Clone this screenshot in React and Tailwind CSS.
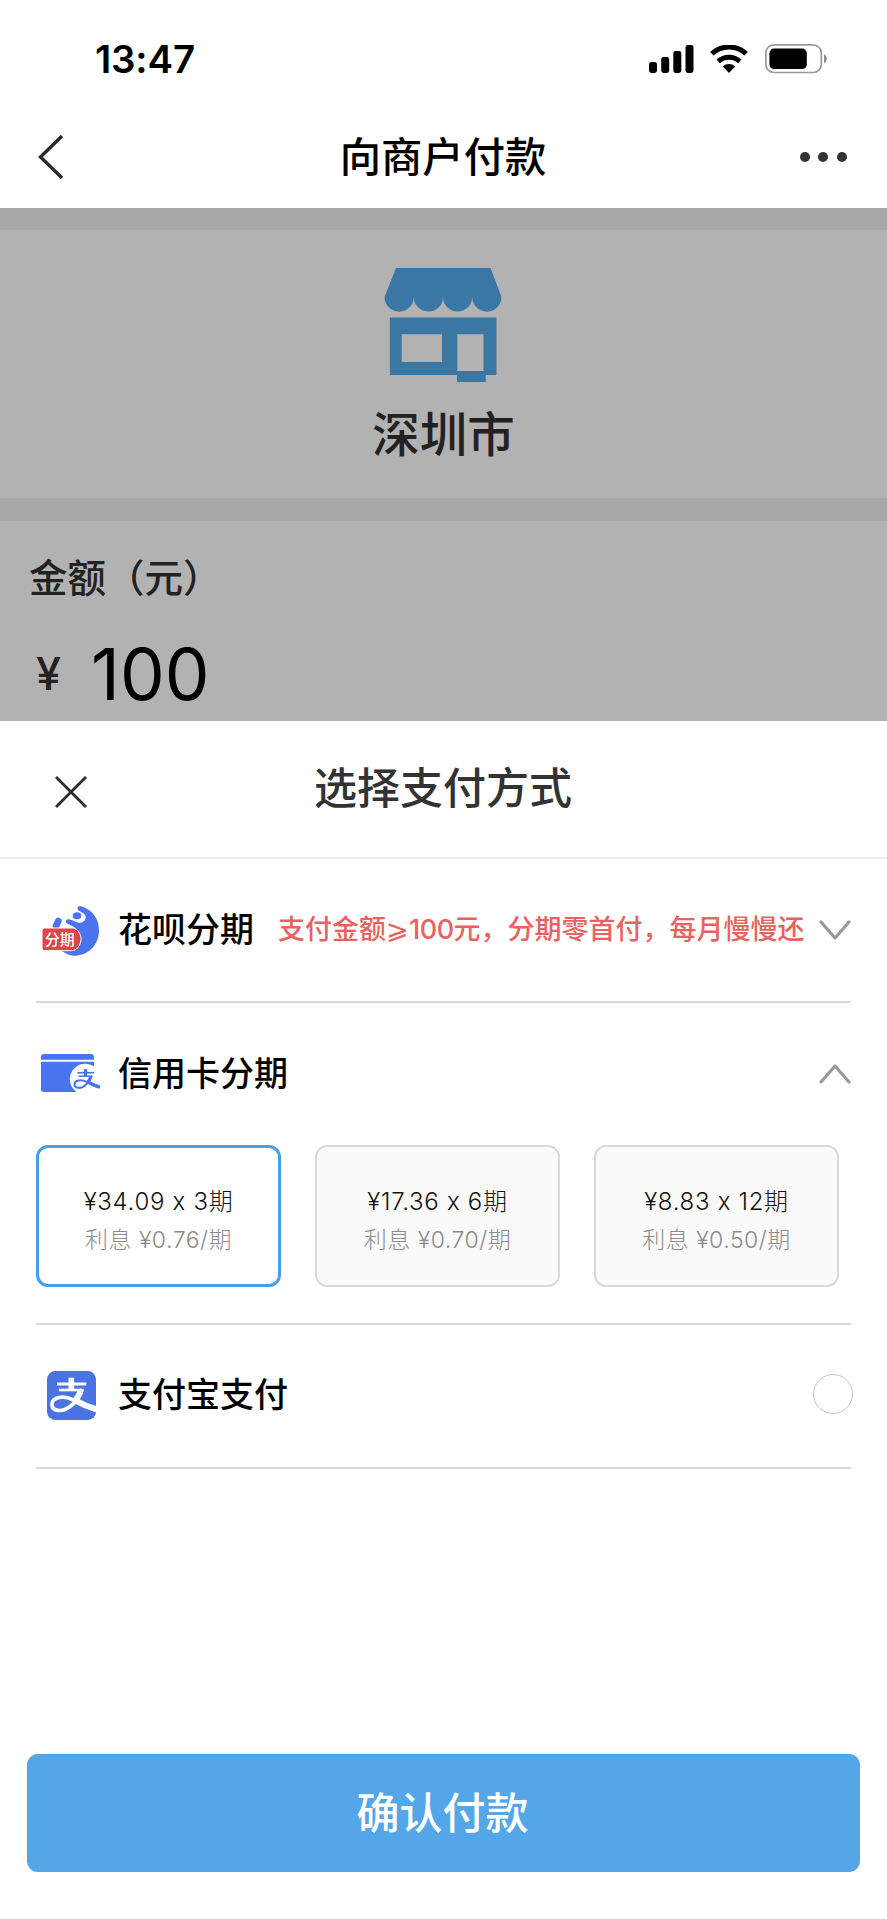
import { useState } from "react"

const plans = [
  { price: "¥34.09 x 3期", fee: "利息 ¥0.76/期" },
  { price: "¥17.36 x 6期", fee: "利息 ¥0.70/期" },
  { price: "¥8.83 x 12期", fee: "利息 ¥0.50/期" }
]

function SignalIcon() {
  return (
    <svg width="45" height="28" viewBox="0 0 45 28">
      <rect x="0" y="17" width="8" height="11" rx="2.4" />
      <rect x="12.2" y="12" width="8" height="16" rx="2.4" />
      <rect x="24.3" y="6" width="8" height="22" rx="2.4" />
      <rect x="36.5" y="0" width="8" height="28" rx="2.4" />
    </svg>
  )
}

function WifiIcon() {
  return (
    <svg width="38" height="28" viewBox="0 0 38 28" fill="none" stroke="#000">
      <path d="M1.8 8.8 A25 25 0 0 1 36.2 8.8" strokeWidth="5" />
      <path d="M8.2 16.4 A16.2 16.2 0 0 1 29.8 16.4" strokeWidth="5" />
      <path d="M19 28 L12.8 21.6 A9 9 0 0 1 25.2 21.6 Z" fill="#000" stroke="none" />
    </svg>
  )
}

function BatteryIcon() {
  return (
    <svg width="63" height="30" viewBox="0 0 63 30">
      <rect x="0.9" y="0.9" width="55.4" height="27.6" rx="8" fill="none" stroke="#9a9a9a" strokeWidth="1.7" />
      <rect x="4.4" y="4.6" width="37.4" height="20.4" rx="4.6" />
      <path d="M59 10.2 C62.6 11.4 62.6 18 59 19.2 Z" fill="#8a8a8a" />
    </svg>
  )
}

function StoreIcon() {
  return (
    <svg width="118" height="115" viewBox="0 0 118 115" fill="#3a77a5">
      <path d="M12 0 H106.5 L117.5 29 A14.6 14.6 0 0 1 88.2 29 A14.6 14.6 0 0 1 59 29 A14.6 14.6 0 0 1 29.8 29 A14.6 14.6 0 0 1 0.5 29 Z" />
      <path
        fillRule="evenodd"
        d="M5.8 49.5 H112.5 V107 H101.7 V114 H73 V107 H5.8 Z M17.7 66.3 V94 H58 V66.3 Z M73.3 66.3 V103 H99.5 V66.3 Z"
      />
    </svg>
  )
}

function HuabeiIcon() {
  return (
    <svg width="58" height="50" viewBox="0 0 174 150" className="overflow-visible">
      <path
        d="M114 0 C150 8 173 40 171 76 C169 120 137 148 101 149 C82 149 66 141 52 128 L106 110 L106 72 C98 64 86 56 76 53 C69 49 71 39 80 40 C92 42 103 50 112 51 C123 51 133 42 131 31 C128 22 119 18 110 14 C104 9 107 0 114 0 Z"
        fill="#4974ee"
      />
      <ellipse cx="105" cy="29" rx="13" ry="10.5" fill="#4974ee" />
      <path d="M42 60 L49 45" stroke="#4974ee" strokeWidth="20" strokeLinecap="round" />
      <path
        d="M8 66 H92 C104 66 117 82 117 98 C117 118 104 134 89 134 H8 Q0 134 0 126 V74 Q0 66 8 66 Z"
        fill="#dc4549"
        stroke="#fff"
        strokeWidth="3"
      />
      <text
        x="8"
        y="117"
        fontSize="45"
        fontWeight="500"
        fill="#fff"
        fontFamily="'Noto Sans CJK SC', sans-serif"
      >
        分期
      </text>
    </svg>
  )
}

// brand mark drawn on a 147 unit square
function AlipayMark({ color }) {
  return (
    <g fill="none" stroke={color}>
      <path d="M73 20 V58" strokeWidth="17" />
      <path d="M30 39 H118" strokeWidth="9" />
      <path d="M36 57 H106" strokeWidth="8" />
      <path
        d="M106 54 C101 76 84 96 66 109 C48 122 14 124 15 99 C16 77 52 73 76 86 C101 99 122 107 148 115"
        strokeWidth="11"
      />
      <path d="M101 56 C98 70 90 82 82 91" strokeWidth="16" />
      <path d="M84 88 C106 100 124 108 148 115" strokeWidth="18" />
    </g>
  )
}

function CreditCardIcon() {
  return (
    <svg width="60" height="40" viewBox="0 0 180 120">
      <path d="M10 0 H149 Q159 0 159 10 V17 H0 V10 Q0 0 10 0 Z" fill="#4974ee" />
      <path d="M0 23 H159 V37 A45 45 0 0 0 107 114 H9 Q0 114 0 105 Z" fill="#4974ee" />
      <g transform="translate(92 34) scale(0.57)">
        <AlipayMark color="#4974ee" />
      </g>
    </svg>
  )
}

function AlipayIcon() {
  return (
    <svg width="49" height="49" viewBox="0 0 147 147">
      <rect width="147" height="147" rx="25" fill="#4974e2" />
      <AlipayMark color="#fff" />
    </svg>
  )
}

function Chevron({ up }) {
  return (
    <svg width="32" height="20" viewBox="0 0 32 20" fill="none" stroke="#999" strokeWidth="3.2" strokeLinecap="round" strokeLinejoin="round">
      <path d={up ? "M2 18 L16 2 L30 18" : "M2 2 L16 18 L30 2"} />
    </svg>
  )
}

export default function App() {

  const [selected, setSelected] = useState(0)

  return (
    <div className="w-[887px] h-[1919px] flex flex-col overflow-hidden bg-white text-black font-['Inter','Noto_Sans_CJK_SC',sans-serif] [font-feature-settings:'calt'_0]">

      {/* STATUS BAR */}
      <div className="h-[106px] shrink-0 flex items-start pl-[95px] pr-[59px] pt-[44px]">
        <span className="text-[38.5px] leading-[30px] font-semibold tracking-[-0.2px]">13:47</span>
        <div className="flex-1" />
        <div className="flex items-start">
          <div className="pt-px mr-[16px]"><SignalIcon /></div>
          <div className="pt-px mr-[17px]"><WifiIcon /></div>
          <BatteryIcon />
        </div>
      </div>

      {/* NAV */}
      <header className="h-[102px] shrink-0 grid grid-cols-3 items-center pl-[37px] pr-[40px]">
        <svg width="28" height="44" viewBox="0 0 28 44" fill="none" stroke="#2b2b2b" strokeWidth="3.4">
          <path d="M25 1 L3.5 22 L25 43" />
        </svg>
        <h1 className="text-[41.3px] leading-[60px] font-medium text-center whitespace-nowrap pl-[2px]">向商户付款</h1>
        <div className="flex justify-end gap-[8.6px]">
          <i className="size-[10px] rounded-full bg-[#333]" />
          <i className="size-[10px] rounded-full bg-[#333]" />
          <i className="size-[10px] rounded-full bg-[#333]" />
        </div>
      </header>

      {/* DIMMED PAGE */}
      <main className="h-[513px] shrink-0 bg-[#b2b2b2] text-[#222] overflow-hidden">
        <div className="h-[22px] bg-[#a8a8a8]" />
        <section className="h-[268px] flex flex-col items-center pt-[38px]">
          <div className="pr-[2px]"><StoreIcon /></div>
          <p className="mt-[17px] text-[47.5px] leading-[70px] font-medium">深圳市</p>
        </section>
        <div className="h-[23px] bg-[#a8a8a8]" />
        <section className="pl-[29px] pt-[28px]">
          <p className="text-[38.5px] leading-[58px] font-medium">金额（元）</p>
          <div className="flex items-start pl-[7px] mt-[22px]">
            <span className="text-[45px] leading-[90px] font-medium w-[55px]">¥</span>
            <span className="text-[71px] leading-[90px] text-black">100</span>
          </div>
        </section>
      </main>

      {/* PAYMENT SHEET */}
      <section className="flex-1 flex flex-col">
        <div className="h-[138px] grid grid-cols-[1fr_auto_1fr] items-start border-b-2 border-[#ededed] pl-[55px] pr-[56px] pt-[37px]">
          <svg className="mt-[18px]" width="32" height="32" viewBox="0 0 32 32" stroke="#2b2b2b" strokeWidth="2.8">
            <path d="M1 1 L31 31 M31 1 L1 31" />
          </svg>
          <h2 className="text-[43px] leading-[60px] font-medium text-[#333]">选择支付方式</h2>
        </div>

        <div className="pl-[36px] pr-[36px]">

          <div className="h-[144px] flex items-center border-b-2 border-[#d8d8d8]">
            <div className="w-[82px] pl-[6px] pt-[2px]"><HuabeiIcon /></div>
            <span className="text-[34px] font-medium pb-[2px]">花呗分期</span>
            <span className="ml-[24px] text-[27px] font-medium text-[#e96260] whitespace-nowrap flex-1">
              支付金额⩾<span className="tracking-[-0.5px]">100</span>元，分期零首付，每月慢慢还
            </span>
            <Chevron />
          </div>

          <div className="border-b-2 border-[#d8d8d8]">
            <div className="h-[142px] flex items-center">
              <div className="w-[82px] pl-[5px]"><CreditCardIcon /></div>
              <span className="flex-1 text-[34px] font-medium pb-[2px]">信用卡分期</span>
              <Chevron up />
            </div>
            <div className="flex gap-[34px] pb-[36px]">
              {plans.map((plan, i) => (
                <button
                  key={i}
                  onClick={() => setSelected(i)}
                  className={
                    i === selected
                      ? "w-[245px] h-[142px] rounded-[12px] border-[3px] border-[#47a0e6] bg-white font-light pt-[9px]"
                      : "w-[245px] h-[142px] rounded-[12px] border-2 border-[#d9d9d9] bg-[#fafafa] font-light pt-[9px]"
                  }
                >
                  <p className="text-[24px] leading-[38px] tracking-[0.7px] text-[#111]">{plan.price}</p>
                  <p className="text-[23px] leading-[38px] tracking-[0.5px] text-[#8c8c8c]">{plan.fee}</p>
                </button>
              ))}
            </div>
          </div>

          <div className="h-[144px] flex items-center border-b-2 border-[#d8d8d8] pb-[2px]">
            <div className="w-[82px] pl-[11px]"><AlipayIcon /></div>
            <span className="flex-1 text-[34px] font-medium pb-[2px]">支付宝支付</span>
            <i className="size-[40px] rounded-full border-[1.5px] border-[#c4c4c4] mr-[-2px] mb-[2px]" />
          </div>

        </div>

        <button className="mt-auto mb-[47px] mx-[27px] h-[118px] rounded-[11px] bg-[#53a6e7] text-white text-[43px] font-medium pr-[2px]">
          确认付款
        </button>
      </section>

    </div>
  )
}
